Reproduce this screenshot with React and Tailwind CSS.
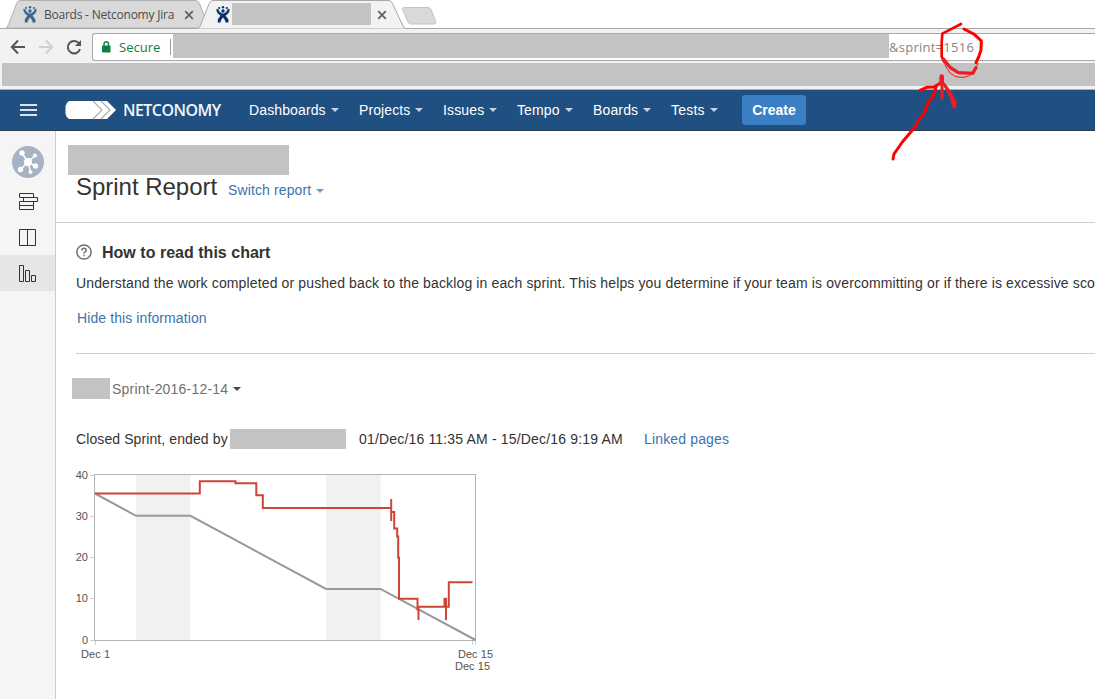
import React from "react";

const UI = "font-['Open_Sans','Noto_Sans',sans-serif]";

function Caret({ className }) {
  return (
    <svg width="8" height="4" viewBox="0 0 8 4" className={className}>
      <path d="M0 0H8L4 4Z" fill="currentColor" />
    </svg>
  );
}

function JiraMark({ color }) {
  return (
    <svg width="14" height="17" viewBox="0 0 14 17" fill={color} className="block shrink-0">
      <circle cx="3.2" cy="2" r="1.1" />
      <circle cx="7" cy="1.2" r="1.2" />
      <circle cx="10.8" cy="2" r="1.1" />
      <circle cx="7" cy="5" r="1.7" />
      <path d="M.6 3.2 2.4 3.5C2.8 6 4.8 7.2 7 8 9.2 7.2 11.2 6 11.6 3.5L13.4 3.2C13.3 6.6 11.3 8.4 9.3 9.6 10 11.2 11.5 12.2 12.1 13.4L12.2 16.2H9.8C9.6 13.8 8.2 12.8 7 11.2 5.8 12.8 4.6 13.8 4.3 16.2H2L2.1 13.4C2.6 12 4.1 11 4.7 9.6 2.7 8.4.7 6.6.6 3.2Z" stroke={color} strokeWidth=".5" />
    </svg>
  );
}

function Close({ color }) {
  return (
    <svg width="10" height="10" viewBox="0 0 10 10" className="block shrink-0" stroke={color} strokeWidth="1.7">
      <path d="M1.200 1.200 8.800 8.800M8.800 1.200 1.200 8.800" />
    </svg>
  );
}

function TabStrip() {
  return (
    <div className="relative h-[29px] bg-white">
      <svg width="1095" height="29" className="absolute inset-0">
        <path d="M6 28C8 27 8 25 9 23L16.500 4Q17.500 .5 20 .5H195Q198 .5 199.500 3.500L207 23L199 28Z" fill="#d9d9d9" stroke="#b0b0b0" />
        <path d="M0 29V28.500H197C200 28 200 26 201 24L209 4Q210.500 .5 213 .5H389Q391 .5 392.500 3.500L402 24Q403.500 28.500 406 28.500H1095V29Z" fill="#f2f2f2" stroke="#a8a8a8" />
        <path d="M404 7.500H428Q430 7.500 431 9.500L436 22Q436 24 434 24H411Q409 24 408 22L402.500 9.500Q402 7.500 404 7.500Z" fill="#d9d9d9" stroke="#c4c4c4" />
      </svg>
      <div className={`relative flex h-[29px] items-center pl-[23px] text-[12px] text-[#4b4b4b] ${UI}`}>
        <JiraMark color="#3b6494" />
        <span className="ml-[7px] w-[140px] whitespace-nowrap tracking-[-0.23px]">Boards - Netconomy Jira</span>
        <Close color="#606060" />
        <div className="ml-[22px]"><JiraMark color="#003366" /></div>
        <div className="ml-[2px] mb-[1px] h-[22px] w-[139px] bg-[#c3c3c3]" />
        <div className="ml-[6px]"><Close color="#606060" /></div>
      </div>
    </div>
  );
}

function Toolbar() {
  return (
    <div className={`flex h-[34px] bg-[#f2f2f2] text-[13px] ${UI}`}>
      <svg width="92" height="34" viewBox="0 29 92 34" fill="none" strokeWidth="2" className="shrink-0">
        <path d="M25 47H12M18 40.500 11.800 47 18 53.500" stroke="#555" />
        <path d="M39 47H52M46 40.500 52.200 47 46 53.500" stroke="#d0d0d0" />
        <path d="M79 43.500A6.200 6.200 0 1 0 80 49" stroke="#555" />
        <path d="M81 40V46H75Z" fill="#555" />
      </svg>
      <div className="mt-1 flex h-7 flex-1 rounded-l-[3px] border border-r-0 border-[#a9a9a9] bg-white">
        <svg width="9" height="12" viewBox="0 0 9 12" className="ml-[9px] mt-[7px] shrink-0">
          <rect x="0" y="4.500" width="8.500" height="7" rx=".7" fill="#0b8043" />
          <path d="M2 5V3a2.250 2.250 0 0 1 4.500 0V5" fill="none" stroke="#0b8043" strokeWidth="1.400" />
        </svg>
        <span className="ml-[8px] w-[51px] leading-[26px] text-[#0b8043]">Secure</span>
        <div className="mt-[5px] h-4 w-px bg-[#999]" />
        <div className="ml-[2px] h-[24px] w-[716px] shrink-0 bg-[#c3c3c3]" />
        <span className="whitespace-nowrap leading-[26px] tracking-[0.26px] text-[#858585]">&amp;sprint=1516</span>
      </div>
    </div>
  );
}

const menu = [
  ["Dashboards", "w-[110px]", "tracking-[0.12px]"],
  ["Projects", "w-[84px]", "tracking-[0.1px]"],
  ["Issues", "w-[74px]", "tracking-[0.15px]"],
  ["Tempo", "w-[76px]", "tracking-[0.12px]"],
  ["Boards", "w-[78px]", "tracking-[0.15px]"],
  ["Tests", "w-[71px]", "tracking-[0.2px]"],
];

function Nav() {
  return (
    <div className="flex h-[41px] items-center border-b border-[#2e3d54] bg-[#205081] text-[14px] text-white">
      <div className="ml-5 flex w-[17px] flex-col gap-[3px]">
        <div className="h-[2px] bg-[#d9e3ee]" />
        <div className="h-[2px] bg-[#d9e3ee]" />
        <div className="h-[2px] bg-[#d9e3ee]" />
      </div>
      <svg width="52" height="20" viewBox="0 0 52 20" className="ml-[28px] shrink-0">
        <path d="M4 1H42L51 10 42 19H4Q1 17 .5 14V6Q1 3 4 1Z" fill="#fff" />
        <path d="M28 1 37 10 28 19M36 1 45 10 36 19" fill="none" stroke="#aaa" strokeWidth="1.100" />
      </svg>
      <span className="ml-[6px] w-[126px] font-['Open_Sans',sans-serif] text-[16px] font-semibold leading-5 tracking-[-0.55px] text-[#f0f5fa]">NETCONOMY</span>
      {menu.map(([label, width, tracking]) => (
        <div key={label} className={`flex shrink-0 items-center ${width}`}>
          <span className={tracking}>{label}</span>
          <Caret className="ml-[5px] text-[#c5d3e2]" />
        </div>
      ))}
      <div className="flex h-[30px] w-16 items-center justify-center rounded-[3px] bg-[#3b7fc4] font-bold">Create</div>
    </div>
  );
}

function Sidebar() {
  return (
    <div className="w-14 shrink-0 border-r border-[#ccc] bg-[#f5f5f5]">
      <svg width="55" height="52" viewBox="0 131 55 52" className="block">
        <circle cx="28" cy="162" r="16" fill="#a5b3c5" />
        <path d="M28 162 22 153M28 162 35 155.500M28 162 20.500 169.500M28 162 35 166M28 162 30.500 172" stroke="#fff" strokeWidth="1.500" />
        <g fill="#fff">
          <circle cx="28" cy="162" r="4" />
          <circle cx="22" cy="153" r="2.700" />
          <circle cx="35" cy="155.500" r="2" />
          <circle cx="20.500" cy="169.500" r="2.700" />
          <circle cx="35.500" cy="166" r="2.700" />
          <circle cx="30.500" cy="172" r="2" />
        </g>
      </svg>
      <svg width="55" height="36" viewBox="0 183 55 36" className="block" fill="none" stroke="#333">
        <path d="M19.500 193.500H33.500V197.500H19.500ZM23.500 197.500H37.500V201.500H23.500ZM19.500 201.500H33.500V205.500H19.500ZM19.500 205.500H33.500V209.500H19.500Z" />
      </svg>
      <svg width="55" height="36" viewBox="0 219 55 36" className="block" fill="none" stroke="#333">
        <path d="M19.500 229.500H35.500V245.500H19.500ZM27.500 229.500V245.500" />
      </svg>
      <div className="bg-[#e6e6e6]">
        <svg width="55" height="36" viewBox="0 255 55 36" className="block" fill="none" stroke="#333">
          <path d="M19.500 265.500H23.500V281.500H19.500ZM25.500 270.500H29.500V281.500H25.500ZM31.500 275.500H35.500V281.500H31.500Z" />
        </svg>
      </div>
    </div>
  );
}

const ticks = [[40, 475], [30, 516.500], [20, 557.500], [10, 598.500], [0, 640.500]];

function Burndown() {
  return (
    <svg width="440" height="220" viewBox="60 460 440 220" className="block" fontFamily="'Liberation Sans', Arial, sans-serif" fontSize="11">
      <rect x="136" y="475" width="54.500" height="165" fill="#f1f1f1" />
      <rect x="326" y="475" width="54.700" height="165" fill="#f1f1f1" />
      <rect x="94.500" y="474.500" width="381" height="166" fill="none" stroke="#b5b5b5" />
      {ticks.map(([n, y]) => (
        <g key={n}>
          <path d={`M90 ${Math.floor(y) + 0.5}H94`} stroke="#d0d0d0" />
          <text x="88" y={Math.floor(y) + 4} textAnchor="end" fill="#545454">{n}</text>
        </g>
      ))}
      <path d="M95.500 641V645M472.500 641V645M475.500 641V645" stroke="#d0d0d0" />
      <path d="M95 493.500 136 515.800H190.500L326 588.900H380.500L475.500 640" fill="none" stroke="#999" strokeWidth="2" />
      <path d="M95 493.500H199.800V481.300H235.500V483.300H256.300V495.300H262.800V508H391.200V499V521V512H394.200V528.500H397.200V536.500H398.200V557.500H399V598.700H417.500V610.500V606.800H418.500V620V606.800H444.500V598.700H446V620V606.800H448.800V582.200H472.500" fill="none" stroke="#d04437" strokeWidth="2" />
      <g fill="#545454">
        <text x="81" y="658" textLength="29">Dec 1</text>
        <text x="458" y="658" textLength="35">Dec 15</text>
        <text x="455" y="670" textLength="35">Dec 15</text>
      </g>
    </svg>
  );
}

function Report() {
  return (
    <div className="min-w-0 flex-1 bg-white text-[14px] leading-5 text-[#333]">
      <div className="h-[92px] border-b border-[#ccc] pt-[14px]">
        <div className="ml-3 h-[30px] w-[221px] bg-[#c3c3c3]" />
        <div className="-mt-[2px] ml-5 flex h-[28px] items-center whitespace-nowrap">
          <span className="w-[152px] text-[24px] leading-7 tracking-[-0.02px]">Sprint Report</span>
          <span className="mt-[6px] tracking-[0.12px] text-[#3b73af]">Switch report</span>
          <Caret className="ml-[5px] mt-[7px] text-[#6b9bc9]" />
        </div>
      </div>
      <div className="ml-5 h-[131px] border-b border-[#ccc] pt-[19px]">
        <div className="flex h-5 items-center">
          <svg width="16" height="16" viewBox="0 0 16 16" className="shrink-0" fill="none" stroke="#707070" strokeWidth="1.500">
            <circle cx="8" cy="8" r="7.100" />
            <path d="M5.800 6.500Q5.800 4.300 8 4.300T10.200 6.400C10.200 8 8 7.800 8 9.700" />
            <path d="M8 10.800V12.300" />
          </svg>
          <h3 className="ml-[10px] mt-[2px] text-[16px] font-bold tracking-[0.02px]">How to read this chart</h3>
        </div>
        <p className="mt-[11px] whitespace-nowrap tracking-[0.135px]">
          Understand the work completed or pushed back to the backlog in each sprint. This helps you determine if your team is overcommitting or if there is excessive sco
        </p>
        <p className="ml-px mt-[15px] tracking-[0.1px] text-[#3b73af]">Hide this information</p>
      </div>
      <div className="ml-4 mt-[24px] flex h-[21px] items-center text-[#707070]">
        <div className="mr-[2px] h-[21px] w-[38px] bg-[#c3c3c3]" />
        <span className="tracking-[0.2px]">Sprint-2016-12-14</span>
        <Caret className="ml-[5px] text-[#444]" />
      </div>
      <div className="ml-5 mt-[30px] flex h-5 items-center whitespace-nowrap">
        <span className="w-[154px] tracking-[0.1px]">Closed Sprint, ended by</span>
        <div className="h-5 w-[116px] bg-[#c3c3c3]" />
        <span className="ml-[13px] w-[285px] tracking-[0.17px]">01/Dec/16 11:35 AM - 15/Dec/16 9:19 AM</span>
        <span className="tracking-[0.15px] text-[#3b73af]">Linked pages</span>
      </div>
      <div className="ml-1 mt-[11px]"><Burndown /></div>
    </div>
  );
}

function RedPen() {
  return (
    <svg width="235" height="170" viewBox="0 0 705 510" className="pointer-events-none absolute left-[860px] top-0" fill="none" stroke="#f00" strokeLinecap="round" strokeLinejoin="round">
      <path d="M303 72 247 101 245 127 245 170 252 185" strokeWidth="8" />
      <path d="M312 87 343 103 364 123 363 150 356 171 348 188" strokeWidth="9" />
      <path d="M251 178 270 202 295 218 338 220 348 203" stroke="#ed1c24" strokeWidth="10" />
      <path d="M252 186Q266 230 300 232T345 208L354 190" stroke="#ed1c24" strokeWidth="3" />
      <path d="M99 477 102 462 127 426 166 380 177 358 192 342 205 306 218 291 229 258" strokeWidth="9" />
      <path d="M180 271 200 262 222 261 246 246" strokeWidth="9" />
      <path d="M245 230V250" stroke="#ed1c24" strokeWidth="14" />
      <path d="M246 250V295" stroke="#ed1c24" strokeWidth="9" />
      <path d="M250 250 268 275 286 308" stroke="#ed1c24" strokeWidth="9" />
      <path d="M256 262 272 292 280 322 287 322 286 308 270 280Z" fill="#ed1c24" stroke="#ed1c24" strokeWidth="5" />
    </svg>
  );
}

export default function App() {
  return (
    <div className="relative flex h-[699px] w-[1095px] flex-col overflow-hidden bg-white font-['Liberation_Sans',Arial,sans-serif]">
      <TabStrip />
      <Toolbar />
      <div className="h-[27px] border-b border-[#b0b0b0] bg-[#f2f2f2] pl-[2px]">
        <div className="h-[23px] bg-[#c3c3c3]" />
      </div>
      <Nav />
      <div className="flex min-h-0 flex-1">
        <Sidebar />
        <Report />
      </div>
      <RedPen />
    </div>
  );
}
